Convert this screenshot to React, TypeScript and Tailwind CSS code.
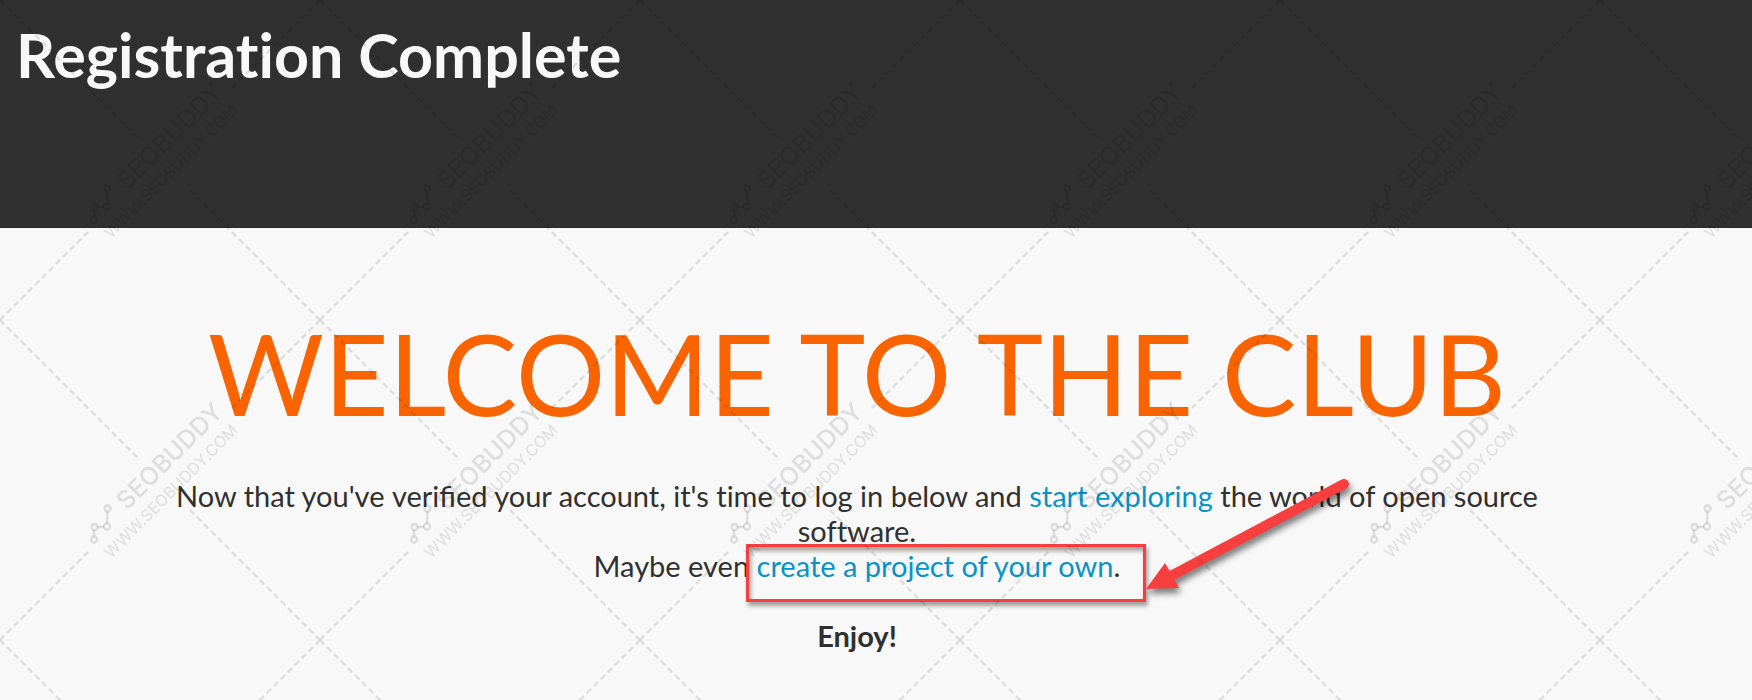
function Watermark() {
  return (
    <svg className="pointer-events-none absolute inset-0 h-full w-full" aria-hidden="true">
      <defs>
        <pattern id="mark" width="320" height="320" patternUnits="userSpaceOnUse">
          <g fill="none" stroke="#000" strokeOpacity="0.11" strokeWidth="2.3">
            <g strokeDasharray="6 3.9">
              <path d="M0 0L138 138" />
              <path d="M190 190L320 320" />
              <path d="M320 0L232 88" />
              <path d="M0 320L88 232" />
            </g>
            <path d="M94 216.500V210M97.500 207H104M107 203.500L107.500 191.500" />
            <circle cx="94" cy="219.500" r="3" />
            <circle cx="94.500" cy="207" r="3" />
            <circle cx="107" cy="206.500" r="3" />
            <circle cx="107.500" cy="188.500" r="3" />
          </g>
          <g fill="#000" fillOpacity="0.11" className="font-[Inter,sans-serif]">
            <text transform="translate(127 191) rotate(-45)" fontSize="25" fontWeight="500">SEOBUDDY</text>
            <text transform="translate(111 239) rotate(-45)" fontSize="16">WWW.SEOBUDDY.COM</text>
          </g>
        </pattern>
      </defs>
      <rect width="100%" height="100%" fill="url(#mark)" />
    </svg>
  );
}

function Arrow() {
  return (
    <svg
      className="pointer-events-none absolute bottom-0 left-full h-[128px] w-[216px] overflow-visible drop-shadow-[2px_5px_3px_rgba(0,0,0,0.5)]"
      viewBox="0 0 216 128"
      aria-hidden="true"
    >
      <path d="M201 13L26 106" stroke="#f73f40" strokeWidth="10" strokeLinecap="round" />
      <path d="M3 118L22 92L36 117Z" fill="#f73f40" />
    </svg>
  );
}

export default function App() {
  return (
    <div className="relative min-h-screen overflow-hidden bg-[#f8f8f8] font-[Lato,sans-serif] text-[#303030] [font-variant-ligatures:none]">
      <header className="h-[228px] border-b border-[#2a2a2a] bg-[#303030] px-4 pt-5">
        <h1 className="text-[61px] leading-[70px] font-bold text-[#f8f8f8]">Registration Complete</h1>
      </header>
      <main className="mr-[38px] px-[140px] pt-[78px] text-center">
        <h2 className="text-[112px] leading-[134px] text-[#fa6400]">WELCOME TO THE CLUB</h2>
        <p className="mt-[38px] text-[29px] leading-[35px]">
          Now that you've <span className="[font-variant-ligatures:normal]">verified</span> your account, it's time to
          log in below and{" "}
          <a href="#explore" className="text-[#0693c9]">start exploring</a> the world of open source software.
          <br />
          Maybe even{" "}
          <span className="relative inline-block">
            <a href="#create" className="text-[#0693c9]">create a project of your own</a>.
            <span className="absolute -top-1 -right-[26px] -bottom-[19px] -left-[11px] border-3 border-[#f73f40] shadow-[2px_4px_4px_rgba(0,0,0,0.35),inset_2px_4px_4px_rgba(0,0,0,0.35)]">
              <Arrow />
            </span>
          </span>
        </p>
        <p className="mt-[35px] text-[29px] leading-[35px] font-bold">Enjoy!</p>
      </main>
      <Watermark />
    </div>
  );
}
